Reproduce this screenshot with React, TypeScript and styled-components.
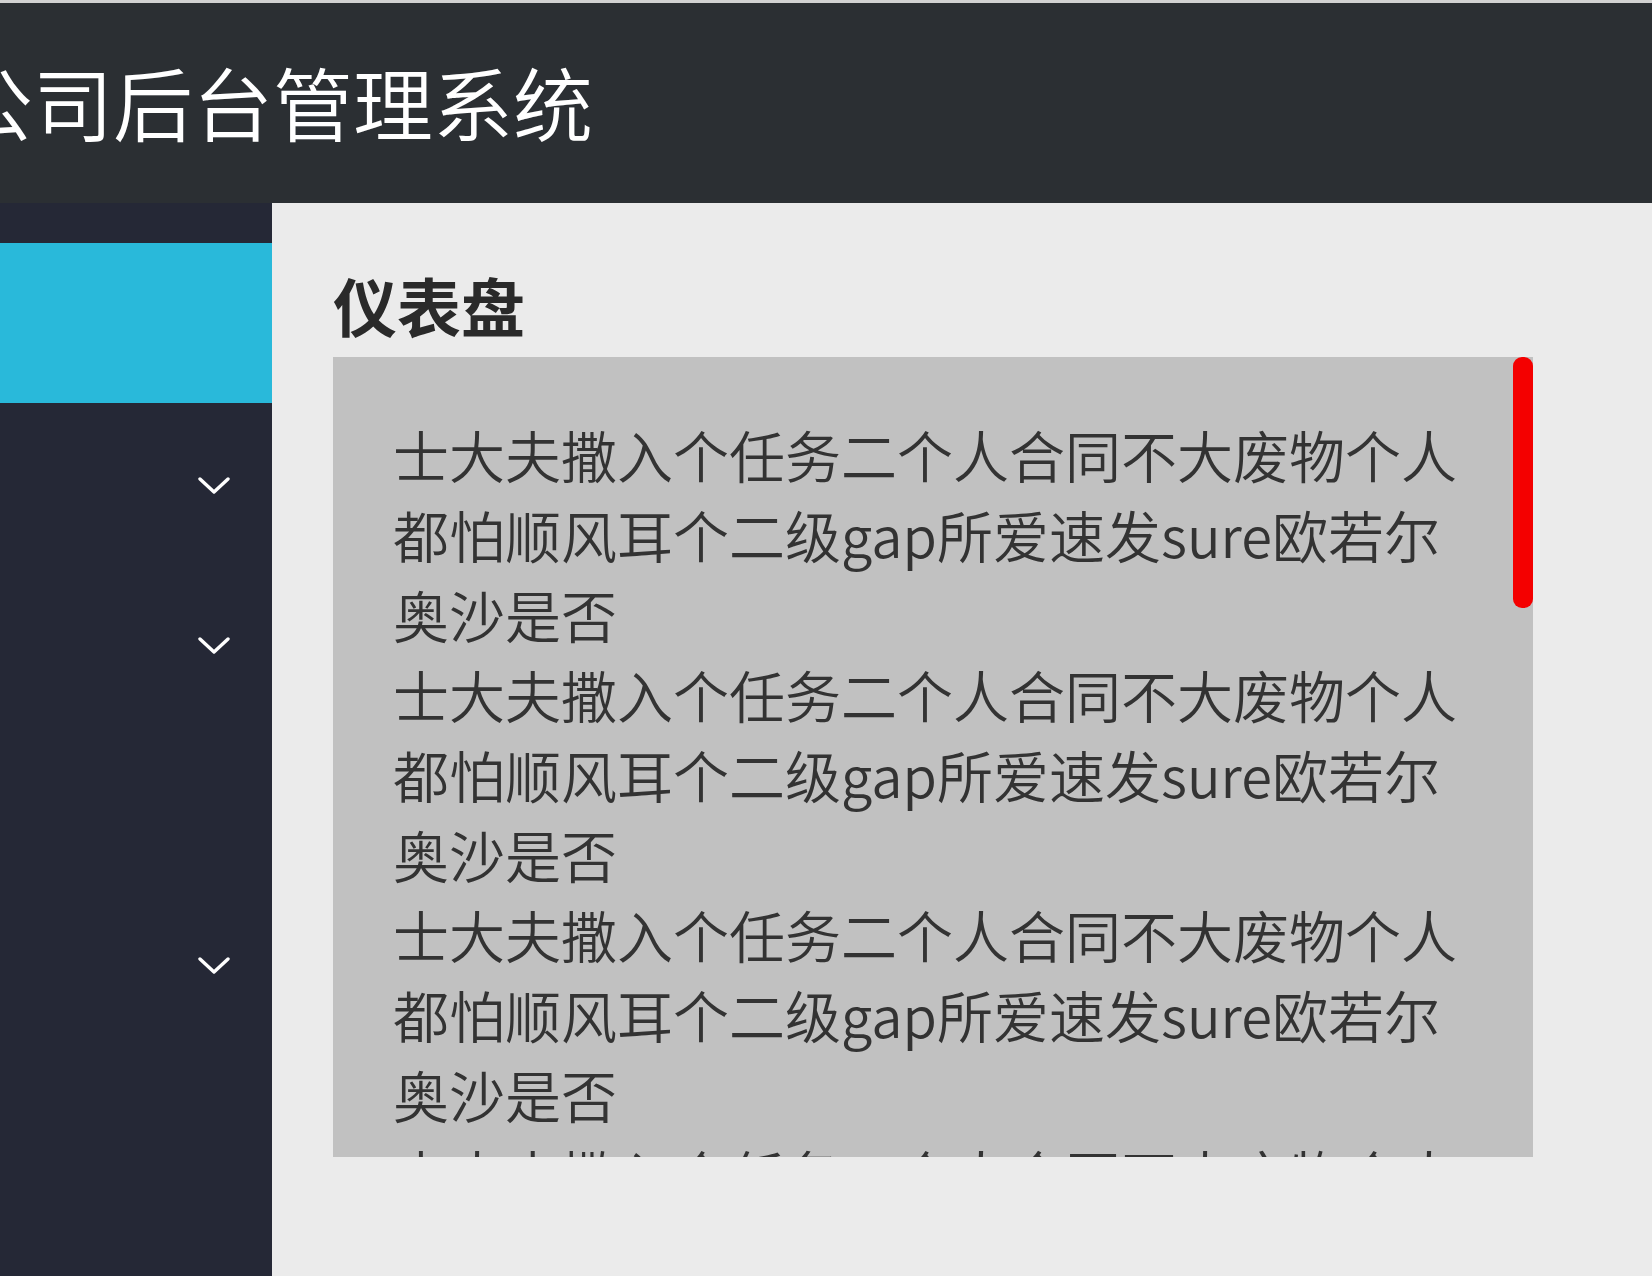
import React from "react";
import styled, { createGlobalStyle } from "styled-components";

const GlobalStyle = createGlobalStyle`
  html, body {
    margin: 0;
    padding: 0;
    background: #ebebeb;
    font-family: "Noto Sans CJK SC", "Noto Sans", sans-serif;
  }
  * { box-sizing: border-box; }
`;

const Page = styled.div`
  display: flex;
  flex-direction: column;
  min-height: 100vh;
  overflow: hidden;
`;

const Header = styled.header`
  height: 203px;
  flex: none;
  background: #2b2f33;
  border-top: 3px solid #d2d2d2;
  display: flex;
  align-items: center;
  padding-bottom: 6px;
  overflow: hidden;
`;

const Title = styled.h1`
  margin: 0 0 0 -47px;
  font-size: 80px;
  line-height: 1;
  font-weight: 350;
  color: #ffffff;
  white-space: nowrap;
`;

const Body = styled.div`
  flex: 1;
  display: flex;
`;

const Sidebar = styled.nav`
  width: 272px;
  flex: none;
  background: #252836;
  padding-top: 40px;
  display: flex;
  flex-direction: column;
`;

const NavItem = styled.div<{ $active?: boolean }>`
  height: 160px;
  display: flex;
  align-items: center;
  justify-content: flex-end;
  padding: 6px 42px 0 0;
  background: ${(p) => (p.$active ? "#29b9da" : "transparent")};
`;

const Chevron = () => (
  <svg width="32" height="18" viewBox="0 0 32 18" fill="none">
    <path d="M2 2 L16 15 L30 2" stroke="#ffffff" strokeWidth="3.4" strokeLinecap="round" strokeLinejoin="round" />
  </svg>
);

const Main = styled.main`
  flex: 1;
  padding: 55px 0 0 61px;
`;

const Heading = styled.h2`
  margin: 0 0 7px;
  font-size: 64px;
  line-height: 92px;
  font-weight: 700;
  color: #2a2a2a;
`;

const ScrollBox = styled.div`
  width: 1200px;
  height: 800px;
  background: #c1c1c1;
  display: flex;
`;

const Content = styled.div`
  flex: 1;
  min-width: 0;
  overflow: hidden;
  padding: 57px 30px 60px 60px;
  color: #333333;
  font-size: 56px;
  line-height: 80px;
  font-weight: 350;
`;

const Track = styled.div`
  width: 20px;
  flex: none;
`;

const Thumb = styled.div`
  width: 20px;
  height: 251px;
  background: #f40000;
  border-radius: 9px;
`;

const Para = styled.p`
  margin: 0;
`;

const text = "士大夫撒入个任务二个人合同不大废物个人都怕顺风耳个二级gap所爱速发sure欧若尔奥沙是否";

export default function App() {
  const items = [
    { active: true, chevron: false },
    { active: false, chevron: true },
    { active: false, chevron: true },
    { active: false, chevron: false },
    { active: false, chevron: true },
  ];
  return (
    <>
      <GlobalStyle />
      <Page>
        <Header>
          <Title>公司后台管理系统</Title>
        </Header>
        <Body>
          <Sidebar>
            {items.map((it, i) => (
              <NavItem key={i} $active={it.active}>
                {it.chevron && <Chevron />}
              </NavItem>
            ))}
          </Sidebar>
          <Main>
            <Heading>仪表盘</Heading>
            <ScrollBox>
              <Content>
                {Array.from({ length: 10 }).map((_, i) => (
                  <Para key={i}>{text}</Para>
                ))}
              </Content>
              <Track>
                <Thumb />
              </Track>
            </ScrollBox>
          </Main>
        </Body>
      </Page>
    </>
  );
}
